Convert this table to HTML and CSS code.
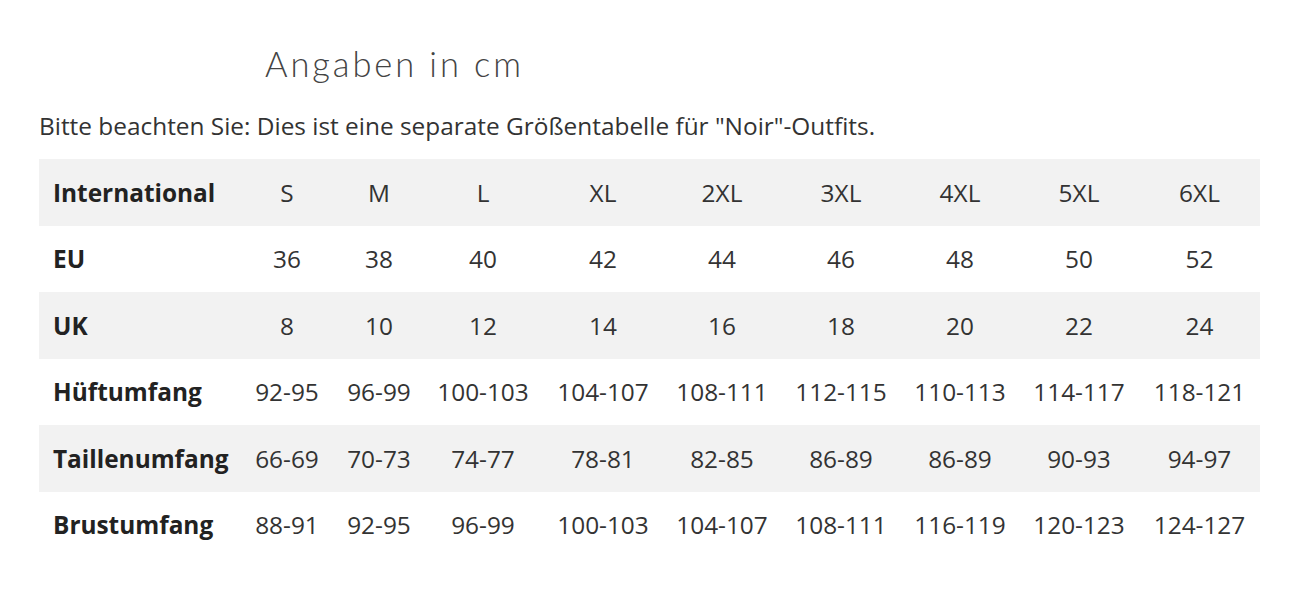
FILE: index.html
```html
<!DOCTYPE html>
<html lang="de">
<head>
<meta charset="utf-8">
<title>Größentabelle</title>
<link rel="stylesheet" href="styles.css">
</head>
<body>
<div class="page">
  <h2 class="title">Angaben in cm</h2>
  <p class="note">Bitte beachten Sie: Dies ist eine separate Größentabelle für "Noir"-Outfits.</p>
  <table class="sizes">
    <colgroup>
      <col class="c0"><col class="c1"><col class="c2"><col class="c3"><col class="c4"><col class="c5"><col class="c6"><col class="c7"><col class="c8"><col class="c9">
    </colgroup>
    <tbody>
      <tr><th>International</th><td>S</td><td>M</td><td>L</td><td>XL</td><td>2XL</td><td>3XL</td><td>4XL</td><td>5XL</td><td>6XL</td></tr>
      <tr><th>EU</th><td>36</td><td>38</td><td>40</td><td>42</td><td>44</td><td>46</td><td>48</td><td>50</td><td>52</td></tr>
      <tr><th>UK</th><td>8</td><td>10</td><td>12</td><td>14</td><td>16</td><td>18</td><td>20</td><td>22</td><td>24</td></tr>
      <tr><th>Hüftumfang</th><td>92-95</td><td>96-99</td><td>100-103</td><td>104-107</td><td>108-111</td><td>112-115</td><td>110-113</td><td>114-117</td><td>118-121</td></tr>
      <tr><th>Taillenumfang</th><td>66-69</td><td>70-73</td><td>74-77</td><td>78-81</td><td>82-85</td><td>86-89</td><td>86-89</td><td>90-93</td><td>94-97</td></tr>
      <tr><th>Brustumfang</th><td>88-91</td><td>92-95</td><td>96-99</td><td>100-103</td><td>104-107</td><td>108-111</td><td>116-119</td><td>120-123</td><td>124-127</td></tr>
    </tbody>
  </table>
</div>
</body>
</html>
```
FILE: styles.css
```css
html, body {
  margin: 0;
  padding: 0;
  background: #ffffff;
}
.page {
  padding: 40px 40px 0 39px;
  font-family: "Open Sans", "Liberation Sans", sans-serif;
  color: #333333;
}
.title {
  margin: 0 0 0 226px;
  font-family: "Lato", "Open Sans", sans-serif;
  font-weight: 300;
  font-size: 34.5px;
  line-height: 48px;
  color: #444444;
  letter-spacing: 2.9px;
}
.note {
  margin: 21px 0 17px 0;
  font-size: 24.4px;
  line-height: 33px;
  color: #333333;
}
.sizes {
  border-collapse: collapse;
  table-layout: fixed;
  width: 1221px;
  font-size: 24.4px;
}
.c0 { width: 200px; }
.c1 { width: 96px; }
.c2 { width: 88px; }
.c3 { width: 120px; }
.c4 { width: 120px; }
.c5 { width: 118px; }
.c6 { width: 120px; }
.c7 { width: 118px; }
.c8 { width: 120px; }
.c9 { width: 121px; }
.sizes tr {
  height: 66.5px;
}
.sizes tr:nth-child(odd) {
  background: #f2f2f2;
}
.sizes th {
  text-align: left;
  font-weight: 700;
  padding: 0 0 0 14px;
  color: #222222;
  white-space: nowrap;
}
.sizes td {
  text-align: center;
  padding: 0;
  white-space: nowrap;
}
```
